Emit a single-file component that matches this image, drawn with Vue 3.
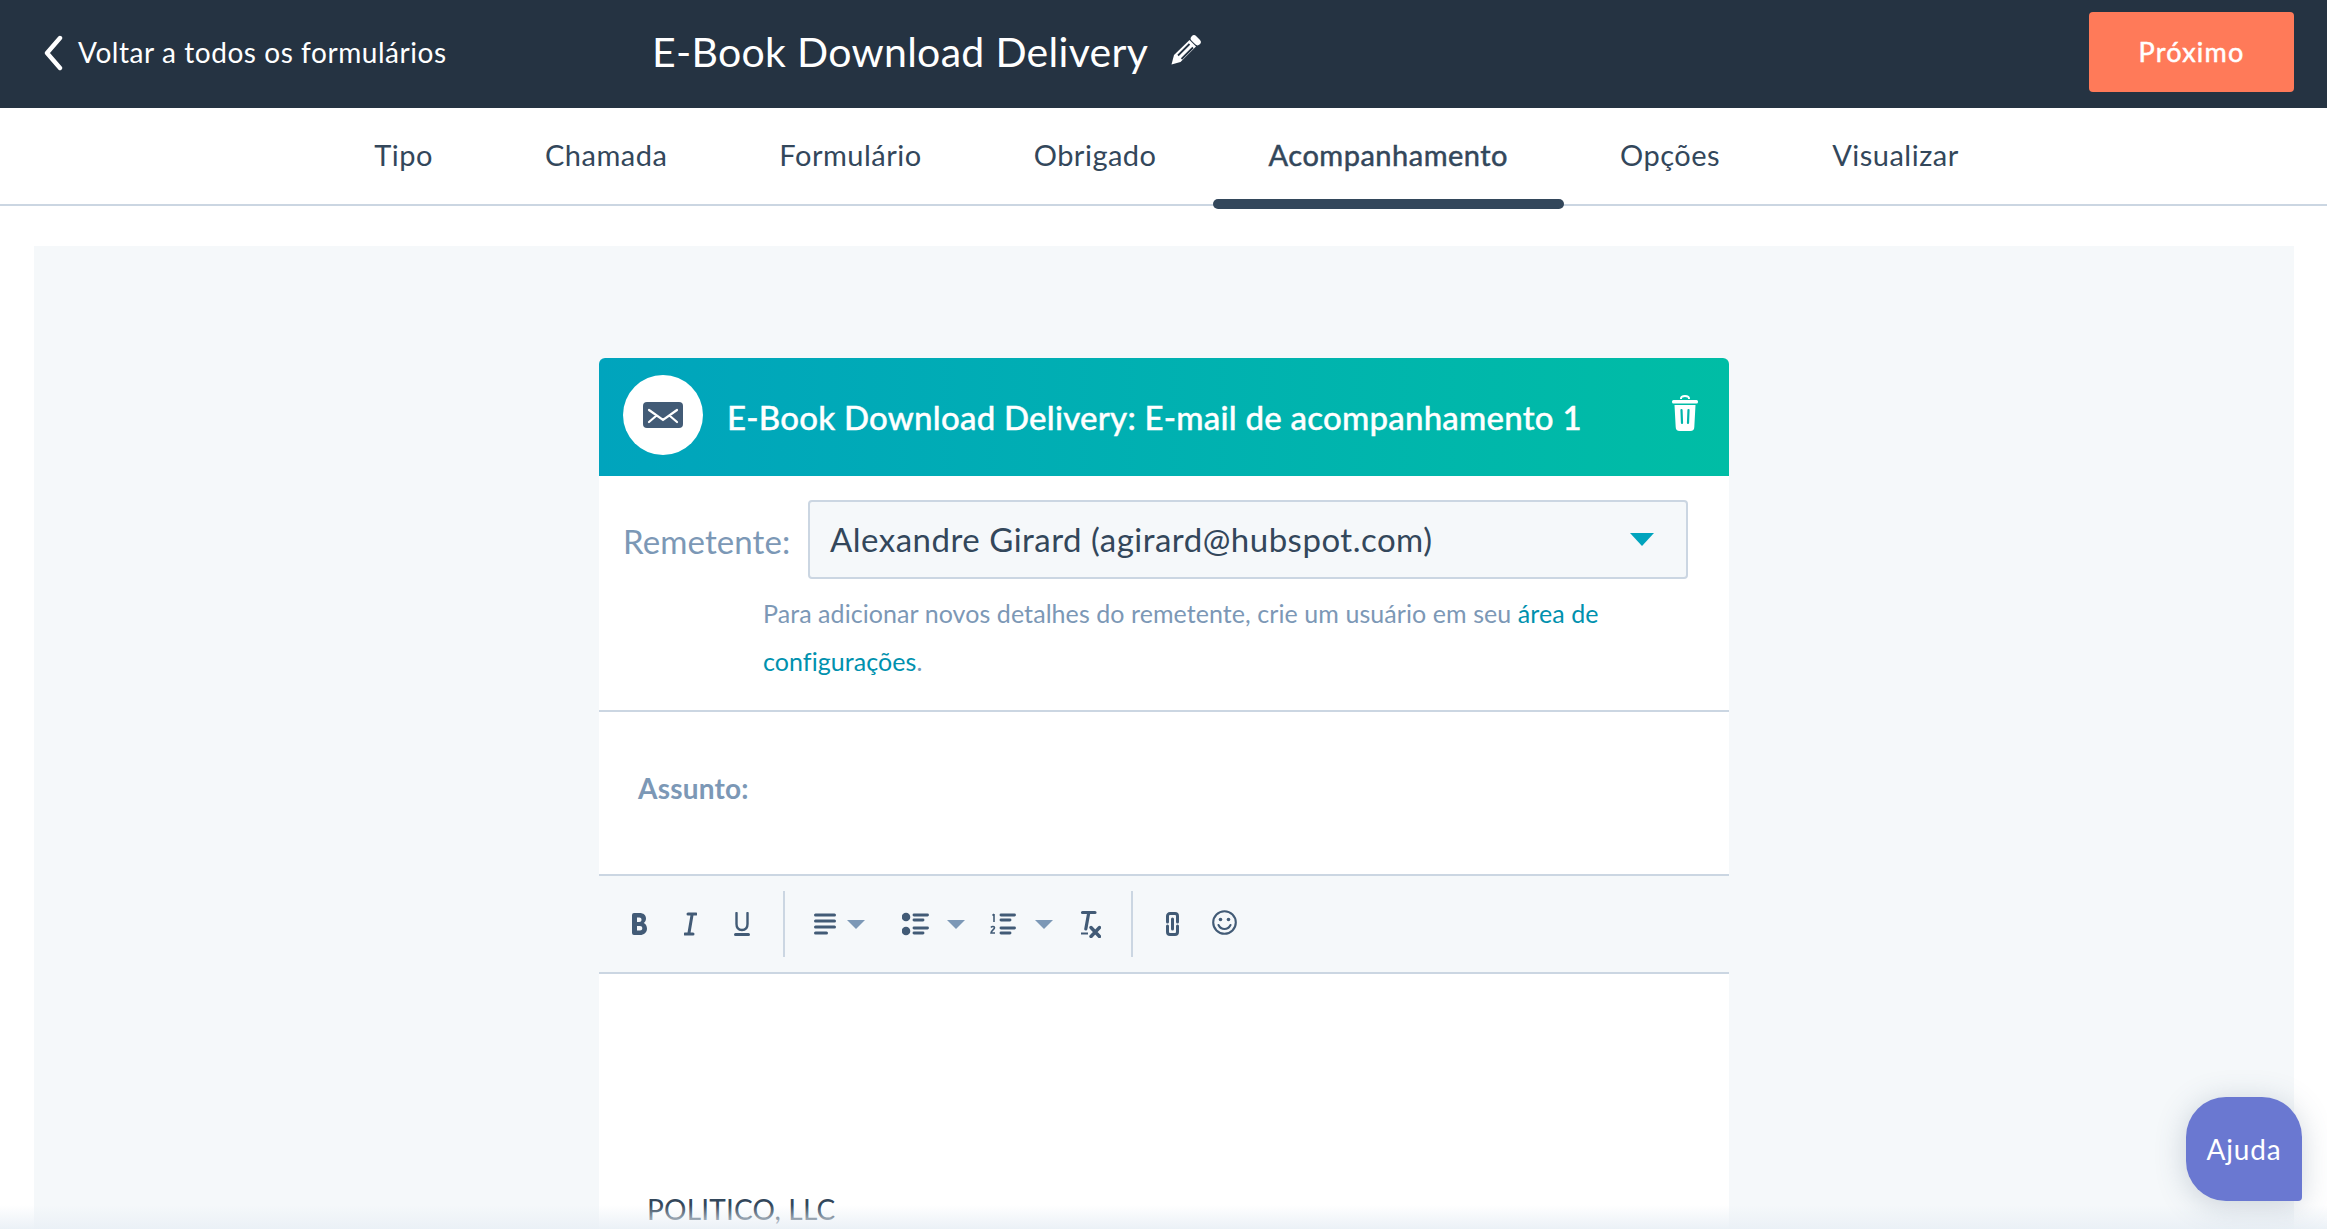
<template>
  <div class="page">
    <header class="topbar">
      <a class="back">
        <svg class="back-icon" viewBox="0 0 20 36"><path d="M17 3 4 18l13 15" fill="none" stroke="#fff" stroke-width="4.400" stroke-linecap="round" stroke-linejoin="round"/></svg>
        Voltar a todos os formulários
      </a>
      <h1 class="form-title">E-Book Download Delivery</h1>
      <svg class="pencil" viewBox="0 0 30 30">
        <path d="M.5 29.500 3 20 18.500 5 25 11.500 9.500 27Z" fill="#fff"/>
        <path d="M7 20.500 18.500 9M10.500 24 22 12.500" stroke="#253342" stroke-width="1.800"/>
        <path d="M23 3.500l3.500 3.500" stroke="#fff" stroke-width="6.500" stroke-linecap="round"/>
      </svg>
      <button class="next">Próximo</button>
    </header>

    <nav class="tabs">
      <a v-for="tab in tabs" :key="tab" class="tab" :class="{ active: tab === 'Acompanhamento' }">{{ tab }}</a>
    </nav>

    <main class="canvas">
      <section class="card">
        <div class="card-head">
          <span class="mail-circle">
            <svg viewBox="0 0 40 26" class="mail-icon">
              <rect width="40" height="26" rx="4" fill="#425b76"/>
              <path d="M6 8l14 10L34 8M6 20l7-6M34 20l-7-6" fill="none" stroke="#fff" stroke-width="2.200" stroke-linecap="round"/>
            </svg>
          </span>
          <h2 class="card-title">E-Book Download Delivery: E-mail de acompanhamento 1</h2>
          <svg class="trash" viewBox="0 0 26 36">
            <path d="M9 4V3.500C9 1.500 10.500 1 13 1s4 .5 4 2.500V4" fill="none" stroke="#fff" stroke-width="2"/>
            <rect x="0" y="5" width="26" height="3.500" rx="1.500" fill="#fff"/>
            <path d="M2.500 10h21l-1.200 22a4 4 0 0 1-4 4H7.700a4 4 0 0 1-4-4Z" fill="#fff"/>
            <path d="M9.500 15l.5 13M16.500 15l-.5 13" stroke="#00b5ac" stroke-width="2.200" stroke-linecap="round"/>
          </svg>
        </div>

        <div class="sender">
          <div class="sender-row">
            <label class="sender-label">Remetente:</label>
            <div class="select">
              <span>Alexandre Girard (agirard@hubspot.com)</span>
              <i class="select-caret"></i>
            </div>
          </div>
          <p class="sender-help">
            Para adicionar novos detalhes do remetente, crie um usuário em seu <a>área de configurações</a>.
          </p>
        </div>

        <div class="subject">Assunto:</div>

        <div class="toolbar">
          <div class="tool-group marks">
            <svg class="ic-b" viewBox="0 0 16 24"><path d="M1 3a2 2 0 0 1 2-2h5.500C12.500 1 15 3.200 15 6.500c0 2-1 3.700-2.300 4.600C14.500 12 16 14 16 16.500 16 20.500 13 23 9 23H3a2 2 0 0 1-2-2ZM6 5.500V10h2.300c1.300 0 2.200-1 2.200-2.300S9.600 5.500 8.300 5.500ZM6 14v4.500h3c1.400 0 2.300-1 2.300-2.300S10.400 14 9 14Z" fill="#425b76" fill-rule="evenodd"/></svg>
            <svg class="ic-i" viewBox="0 0 13 24"><path d="M4 2h8M1 22h8M8.200 2 4.800 22" fill="none" stroke="#425b76" stroke-width="3" stroke-linecap="round"/></svg>
            <svg class="ic-u" viewBox="0 0 16 24"><path d="M2.500 1v11c0 4 2 6 5.500 6s5.500-2 5.500-6V1" fill="none" stroke="#425b76" stroke-width="2.400" stroke-linecap="round"/><path d="M1.500 22.500h13" stroke="#425b76" stroke-width="3" stroke-linecap="round"/></svg>
          </div>
          <span class="sep sep-first"></span>
          <div class="tool-group lists">
            <span class="with-caret">
              <svg class="ic-align" viewBox="0 0 22 24"><path d="M1.500 3h19M1.500 9h19M1.500 15h19M1.500 21h11" stroke="#425b76" stroke-width="3" stroke-linecap="round"/></svg>
              <i class="mini-caret near"></i>
            </span>
            <span class="with-caret">
              <svg class="ic-bullets" viewBox="0 0 27 24"><circle cx="4" cy="5" r="4.300" fill="#425b76"/><circle cx="4" cy="19" r="4.300" fill="#425b76"/><path d="M12 3h13.500M12 8h9M12 16h13.500M12 21h9" stroke="#425b76" stroke-width="2.900" stroke-linecap="round"/></svg>
              <i class="mini-caret"></i>
            </span>
            <span class="with-caret">
              <svg class="ic-numbers" viewBox="0 0 26 24"><path d="M4 2v8M2.500 3.500 4 2M1 15.500c1-1.500 3.500-1.200 3.500.3 0 1.500-3.500 3-3.500 5.200h4" fill="none" stroke="#425b76" stroke-width="1.600"/><path d="M11 3h13.500M11 8h9M11 16h13.500M11 21h9" stroke="#425b76" stroke-width="2.900" stroke-linecap="round"/></svg>
              <i class="mini-caret"></i>
            </span>
            <svg class="ic-clear" viewBox="0 0 21 28"><path d="M2.500 2.500h12.500M8.800 2.500 5.800 19" fill="none" stroke="#425b76" stroke-width="3.200" stroke-linecap="round"/><path d="M1 23.500h7" stroke="#425b76" stroke-width="2"/><path d="M11 17.500l8.500 9M19.500 17.500l-8.500 9" stroke="#425b76" stroke-width="3.400" stroke-linecap="round"/></svg>
          </div>
          <span class="sep sep-second"></span>
          <div class="tool-group extras">
            <svg class="ic-link" viewBox="0 0 13 24"><path d="M1.500 10V4a2.500 2.500 0 0 1 2.500-2.500h5A2.500 2.500 0 0 1 11.500 4v6M1.500 14v6A2.500 2.500 0 0 0 4 22.500h5a2.500 2.500 0 0 0 2.500-2.500v-6M6.500 7v10" fill="none" stroke="#425b76" stroke-width="3" stroke-linecap="round"/></svg>
            <svg class="ic-smile" viewBox="0 0 25 25"><circle cx="12.500" cy="12.500" r="11.300" fill="none" stroke="#425b76" stroke-width="2.100"/><circle cx="8.500" cy="9.500" r="1.800" fill="#425b76"/><circle cx="16.500" cy="9.500" r="1.800" fill="#425b76"/><path d="M6.500 15c1.500 3 3.500 4 6 4s4.500-1 6-4" fill="none" stroke="#425b76" stroke-width="2.100" stroke-linecap="round"/></svg>
          </div>
        </div>

        <div class="editor">
          <p class="company">POLITICO, LLC</p>
        </div>
      </section>
    </main>

    <div class="bottom-fade"></div>
    <button class="help">Ajuda</button>
  </div>
</template>

<script setup>
const tabs = ['Tipo', 'Chamada', 'Formulário', 'Obrigado', 'Acompanhamento', 'Opções', 'Visualizar']
</script>

<style>
html, body {
  margin: 0;
  height: 100%;
  overflow: hidden;
  background: #fff;
}
</style>

<style scoped>
.page {
  position: relative;
  height: 1229px;
  overflow: hidden;
  font-family: Lato, "Open Sans", sans-serif;
  color: #33475b;
}

.topbar {
  height: 108px;
  box-sizing: border-box;
  padding: 0 33px 5px 43px;
  background: #253342;
  display: flex;
  align-items: center;
  color: #fff;
}
.back {
  width: 609px;
  display: flex;
  align-items: center;
  font-size: 28px;
  line-height: 36px;
  letter-spacing: 0.56px;
}
.back-icon {
  width: 20px;
  height: 36px;
  margin-right: 15px;
  margin-top: 3px;
}
.form-title {
  margin: 0;
  font-size: 41px;
  font-weight: 400;
  line-height: 52px;
  letter-spacing: 0.3px;
}
.pencil {
  width: 30px;
  height: 30px;
  margin-left: 23px;
  margin-top: -3px;
}
.next {
  margin-left: auto;
  width: 205px;
  height: 80px;
  border: 0;
  border-radius: 4px;
  background: #ff7a59;
  color: #fff;
  font-family: inherit;
  font-size: 27px;
  font-weight: 400;
  letter-spacing: 1.2px;
  -webkit-text-stroke: 0.5px #fff;
}

.tabs {
  height: 96px;
  padding-left: 6px;
  box-sizing: content-box;
  display: flex;
  justify-content: center;
  border-bottom: 2px solid #cbd6e2;
  position: relative;
}
.tab {
  position: relative;
  padding: 29px 56px 0;
  font-size: 29px;
  line-height: 36px;
  letter-spacing: 0.5px;
  color: #33475b;
}
.tab.active {
  -webkit-text-stroke: 0.5px #33475b;
}
.tab.active::after {
  content: "";
  position: absolute;
  left: 0;
  right: 0;
  bottom: -5px;
  height: 10px;
  border-radius: 5px;
  background: #33475b;
}

.canvas {
  margin: 40px 33px 0 34px;
  padding-top: 112px;
  height: 900px;
  background: #f5f8fa;
  display: flex;
  justify-content: center;
}
.card {
  width: 1130px;
  height: 1000px;
  background: #fff;
  border-radius: 6px 6px 0 0;
}
.card-head {
  height: 118px;
  padding: 0 31px 0 24px;
  border-radius: 6px 6px 0 0;
  background: linear-gradient(90deg, #00a4bd, #00bda5);
  display: flex;
  align-items: center;
  color: #fff;
}
.mail-circle {
  width: 80px;
  height: 80px;
  margin-top: -4px;
  border-radius: 50%;
  background: #fff;
  display: flex;
  align-items: center;
  justify-content: center;
  flex: none;
}
.mail-icon {
  width: 40px;
  height: 26px;
}
.card-title {
  margin: 0 0 0 24px;
  font-size: 33px;
  font-weight: 500;
  line-height: 44px;
  letter-spacing: 0.23px;
  -webkit-text-stroke: 0.4px #fff;
}
.trash {
  margin-left: auto;
  width: 26px;
  height: 36px;
  margin-top: -8px;
}

.sender {
  height: 236px;
  padding: 24px 41px 0 24px;
  box-sizing: border-box;
  border-bottom: 2px solid #cbd6e2;
}
.sender-row {
  display: flex;
  align-items: center;
}
.sender-label {
  width: 185px;
  flex: none;
  padding-top: 2px;
  font-size: 33px;
  letter-spacing: 0.1px;
  color: #7c98b6;
}
.select {
  flex: 1;
  height: 79px;
  box-sizing: border-box;
  border: 2px solid #cbd6e2;
  border-radius: 4px;
  background: #f5f8fa;
  display: flex;
  align-items: center;
  justify-content: space-between;
  padding: 0 32px 0 20px;
  font-size: 33px;
  letter-spacing: 0.5px;
  color: #33475b;
}
.select span {
  margin-top: -2px;
}
.select-caret {
  width: 0;
  height: 0;
  border-left: 12px solid transparent;
  border-right: 12px solid transparent;
  border-top: 13px solid #00a4bd;
  margin-top: -1px;
}
.sender-help {
  margin: 10px 40px 0 140px;
  font-size: 25px;
  line-height: 48px;
  letter-spacing: 0.07px;
  color: #7c98b6;
}
.sender-help a {
  color: #0091ae;
}

.subject {
  height: 162px;
  box-sizing: border-box;
  padding: 0 0 10px 39px;
  display: flex;
  align-items: center;
  font-size: 28px;
  font-weight: 700;
  letter-spacing: 0.2px;
  color: #7c98b6;
}

.toolbar {
  height: 100px;
  box-sizing: border-box;
  border-top: 2px solid #cbd6e2;
  border-bottom: 2px solid #cbd6e2;
  background: #f5f8fa;
  display: flex;
  align-items: center;
  padding-left: 32px;
}
.tool-group {
  display: flex;
  align-items: center;
}
.marks {
  gap: 37px;
}
.lists {
  margin-left: 28px;
}
.extras {
  margin-left: 33px;
  gap: 33px;
}
.sep {
  width: 2px;
  height: 66px;
  background: #cbd6e2;
}
.sep-first {
  margin-left: 33px;
}
.sep-second {
  margin-left: 30px;
}
.with-caret {
  display: flex;
  align-items: center;
  gap: 19px;
  margin-right: 25px;
}
.with-caret:first-child {
  gap: 11px;
  margin-right: 36px;
}
.ic-b { width: 16px; height: 24px; }
.ic-i { width: 13px; height: 24px; }
.ic-u { width: 16px; height: 24px; }
.ic-align { width: 22px; height: 24px; margin-left: 1px; }
.ic-bullets { width: 27px; height: 24px; margin-left: 1px; margin-right: -1px; }
.ic-numbers { width: 26px; height: 24px; }
.ic-clear { width: 21px; height: 28px; margin-left: 2px; }
.ic-link { width: 13px; height: 24px; }
.ic-smile { width: 25px; height: 25px; margin-top: -3px; }
.mini-caret {
  width: 0;
  height: 0;
  border-left: 9px solid transparent;
  border-right: 9px solid transparent;
  border-top: 9px solid #7c98b6;
}
.mini-caret.near {
  margin-top: 1px;
}

.editor {
  padding: 217px 48px 0;
}
.company {
  margin: 0;
  font-size: 28px;
  line-height: 36px;
  letter-spacing: 0.2px;
  color: #33475b;
}

.bottom-fade {
  position: absolute;
  left: 0;
  right: 0;
  bottom: 0;
  height: 24px;
  background: linear-gradient(rgba(234, 240, 246, 0), rgba(234, 240, 246, 0.95));
}

.help {
  position: absolute;
  left: 2186px;
  top: 1097px;
  width: 116px;
  height: 104px;
  border: 0;
  border-radius: 40px 40px 4px 40px;
  background: #6a78d1;
  color: #fff;
  font-family: inherit;
  font-size: 28px;
  letter-spacing: 0.8px;
  box-shadow: 0 4px 30px rgba(66, 91, 118, 0.25);
}
</style>
